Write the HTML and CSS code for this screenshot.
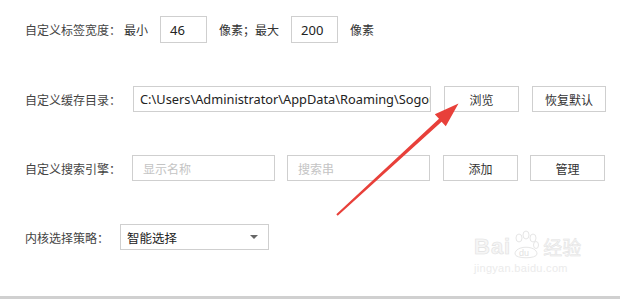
FILE: index.html
```html
<!DOCTYPE html>
<html lang="zh-CN">
<head>
  <meta charset="UTF-8">
  <title>设置</title>
  <link rel="stylesheet" href="styles.css">
</head>
<body>
  <div class="settings">
    <div class="row row-first">
      <span class="label">自定义标签宽度：</span>
      <span class="unit">最小</span>
      <div class="box num">46</div>
      <span class="unit">像素；最大</span>
      <div class="box num">200</div>
      <span class="unit">像素</span>
    </div>

    <div class="row">
      <span class="label">自定义缓存目录：</span>
      <div class="box path"><span class="path-text">C:\Users\Administrator\AppData\Roaming\Sogou</span></div>
      <button class="btn btn-browse">浏览</button>
      <button class="btn btn-reset">恢复默认</button>
    </div>

    <div class="row">
      <span class="label">自定义搜索引擎：</span>
      <div class="box field placeholder">显示名称</div>
      <div class="box field placeholder">搜索串</div>
      <button class="btn btn-add">添加</button>
      <button class="btn btn-manage">管理</button>
    </div>

    <div class="row">
      <span class="label">内核选择策略：</span>
      <div class="box select">
        <span>智能选择</span>
        <i class="caret"></i>
      </div>
    </div>
  </div>

  <!-- red arrow drawn over the screenshot -->
  <svg class="arrow" width="620" height="299" viewBox="0 0 620 299">
    <polygon fill="#e8403a" points="336.3,214.2 439.0,118.7 434.8,114.2 458.5,103.5 445.8,126.2 441.6,121.7 337.7,215.8"/>
  </svg>

  <div class="watermark">
    <div class="wm-top">
      <span class="wm-bai">Bai</span>
      <svg class="wm-paw" width="30" height="30" viewBox="0 0 30 30">
        <g fill="none" stroke="#e6e6e6" stroke-width="1">
          <ellipse cx="8" cy="8" rx="3" ry="4"/>
          <ellipse cx="15" cy="5" rx="3" ry="4"/>
          <ellipse cx="22" cy="8" rx="3" ry="4"/>
          <ellipse cx="25" cy="15" rx="2.5" ry="3.5"/>
          <path d="M4 24 C4 15 26 15 26 24 C26 29 4 29 4 24 Z"/>
        </g>
        <text x="8" y="26" font-size="9" fill="#e2e2e2" font-family="Liberation Sans, sans-serif">du</text>
      </svg>
      <span class="wm-jy">经验</span>
    </div>
    <div class="wm-url">jingyan.baidu.com</div>
  </div>

  <div class="bottom-bar"></div>
</body>
</html>
```

FILE: styles.css
```css
html, body {
  margin: 0;
  padding: 0;
}

body {
  width: 620px;
  height: 299px;
  background: #ffffff;
  color: #333333;
  font-family: "Noto Sans CJK SC", "Noto Sans", sans-serif;
  font-size: 12px;
  position: relative;
  overflow: hidden;
}

.settings {
  padding: 16px 0 0 25px;
}

.row {
  display: flex;
  align-items: center;
  height: 26px;
  margin-top: 43px;
}

.row-first {
  margin-top: 0;
  height: 27px;
}

.label {
  width: 96px;
  white-space: nowrap;
  color: #444444;
}

.unit {
  white-space: nowrap;
  margin-left: 3px;
}

.row-first .unit + .box,
.row-first .box + .unit {
  margin-left: 12px;
}

.box {
  box-sizing: border-box;
  height: 100%;
  border: 1px solid #cfcfcf;
  background: #ffffff;
  display: flex;
  align-items: center;
  padding-left: 7px;
  white-space: nowrap;
  overflow: hidden;
}

.num {
  width: 47px;
  font-family: "Noto Sans", "Open Sans", sans-serif;
  font-size: 13px;
  color: #222222;
  padding-left: 9px;
}

.path {
  width: 298px;
  margin-left: 12px;
  font-family: "Noto Sans", "Open Sans", sans-serif;
  font-size: 12.8px;
  color: #222222;
  padding-left: 6px;
}

.path-text {
  display: block;
  min-width: 0;
  overflow: hidden;
  flex: 1;
}

.field {
  width: 143px;
}

.field:first-of-type {
  margin-left: 11px;
}

.field + .field {
  margin-left: 12px;
}

.placeholder {
  color: #c4c4c4;
  padding-left: 10px;
}

.btn {
  box-sizing: border-box;
  height: 100%;
  width: 75px;
  border: 1px solid #cfcfcf;
  background: #ffffff;
  color: #333333;
  font-family: "Noto Sans CJK SC", sans-serif;
  font-size: 12px;
  padding: 0;
}

.btn-browse {
  margin-left: 13px;
}

.btn-reset {
  margin-left: 13px;
  width: 74px;
}

.btn-add {
  margin-left: 13px;
}

.btn-manage {
  margin-left: 12px;
}

.select {
  width: 149px;
  margin-left: -1px;
  justify-content: space-between;
  padding: 0 10px 0 6px;
  color: #222222;
  font-size: 12.5px;
}

.caret {
  width: 0;
  height: 0;
  border-left: 4px solid transparent;
  border-right: 4px solid transparent;
  border-top: 4px solid #666666;
}

.arrow {
  position: absolute;
  left: 0;
  top: 0;
}

.watermark {
  position: absolute;
  left: 474px;
  top: 230px;
  color: #efefef;
  font-family: "Liberation Sans", sans-serif;
}

.wm-top {
  display: flex;
  align-items: flex-end;
}

.wm-bai {
  font-size: 22px;
  font-weight: bold;
  letter-spacing: 1px;
  color: #f6f6f6;
  -webkit-text-stroke: 0.6px #e2e2e2;
}

.wm-jy {
  font-family: "Noto Sans CJK SC", sans-serif;
  font-size: 19px;
  color: #f6f6f6;
  -webkit-text-stroke: 0.5px #e2e2e2;
  margin-left: 2px;
}

.wm-url {
  font-size: 11px;
  color: #ebebeb;
  margin-top: 2px;
  letter-spacing: 0.3px;
}

.bottom-bar {
  position: absolute;
  left: 0;
  right: 0;
  bottom: 0;
  height: 3px;
  background: #d0d0d0;
}
```
